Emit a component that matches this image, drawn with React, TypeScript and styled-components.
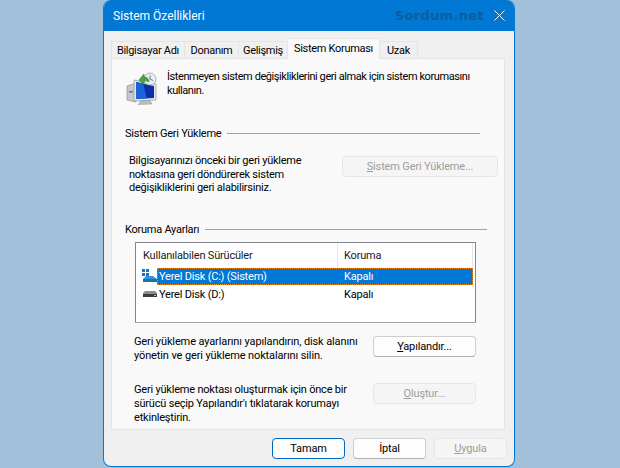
import React from "react";
import styled, { createGlobalStyle } from "styled-components";

const GlobalStyle = createGlobalStyle`
  html, body {
    margin: 0;
    padding: 0;
    height: 468px;
    overflow: hidden;
    background: #a2c0da;
    font-family: Roboto, "Noto Sans", sans-serif;
    font-size: 11px;
    color: #000000;
  }
`;

const Page = styled.div`
  width: 620px;
  height: 468px;
  padding-left: 103px;
  box-sizing: border-box;
`;

const Window = styled.div`
  width: 412px;
  height: 467px;
  box-sizing: border-box;
  background: #f0f0f0;
  border: 1px solid #0078d4;
  border-top: none;
  border-radius: 8px;
  overflow: hidden;
  display: flex;
  flex-direction: column;
`;

const TitleBar = styled.div`
  height: 31px;
  flex: none;
  background: #0078d4;
  color: #ffffff;
  display: flex;
  align-items: center;
  padding: 0 9px 0 9px;
  font-size: 12px;
`;

const Watermark = styled.span`
  margin-left: auto;
  margin-right: 10px;
  font-family: "DejaVu Sans", sans-serif;
  font-weight: 700;
  font-size: 13px;
  letter-spacing: 0.3px;
  color: #0f5c9e;
`;

const Body = styled.div`
  flex: 1;
  display: flex;
  flex-direction: column;
  padding: 10px 9px 0 7px;
`;

const Tabs = styled.div`
  display: flex;
  height: 17px;
  position: relative;
  z-index: 1;
  letter-spacing: -0.3px;
`;

const Tab = styled.div<{ $w: number; $active?: boolean }>`
  box-sizing: border-box;
  height: ${(p) => (p.$active ? "21px" : "18px")};
  margin-top: ${(p) => (p.$active ? "-3px" : "0")};
  width: ${(p) => p.$w}px;
  background: ${(p) => (p.$active ? "#f9f9f9" : "#f0f0f0")};
  border: 1px solid #e4e4e4;
  border-left: none;
  border-bottom: ${(p) => (p.$active ? "none" : "1px solid #e4e4e4")};
  display: flex;
  align-items: center;
  justify-content: center;
  padding-bottom: ${(p) => (p.$active ? "2px" : "0")};
  white-space: nowrap;

  &:first-child {
    border-left: 1px solid #e4e4e4;
  }
`;

const Panel = styled.div`
  box-sizing: border-box;
  height: 372px;
  background: #f9f9f9;
  border: 1px solid #e4e4e4;
  padding: 13px 6px 0 13px;
  display: flex;
  flex-direction: column;
`;

const Intro = styled.div`
  display: flex;
  gap: 10px;
  height: 54px;
`;

const RestoreSvg = styled.svg`
  flex: none;
`;

const IntroText = styled.div`
  line-height: 13.5px;
  margin-top: -2px;
  white-space: nowrap;
  letter-spacing: -0.42px;
`;

const GroupHead = styled.div<{ $end: number; $top: number }>`
  display: flex;
  align-items: center;
  gap: 6px;
  height: 14px;
  margin-top: ${(p) => p.$top}px;
  margin-right: ${(p) => p.$end}px;
  white-space: nowrap;
  letter-spacing: -0.25px;

  &::after {
    content: "";
    flex: 1;
    height: 1px;
    background: #a0a0a0;
  }
`;

const ActionRow = styled.div<{ $left: number; $top: number }>`
  display: flex;
  justify-content: space-between;
  align-items: flex-start;
  margin-left: ${(p) => p.$left}px;
  margin-top: ${(p) => p.$top}px;
`;

const ActionText = styled.div<{ $line: number; $spacing: number }>`
  line-height: ${(p) => p.$line}px;
  letter-spacing: ${(p) => p.$spacing}px;
  white-space: nowrap;
`;

const Btn = styled.div<{
  $w: number;
  $disabled?: boolean;
  $primary?: boolean;
  $top?: number;
  $right?: number;
}>`
  box-sizing: border-box;
  width: ${(p) => p.$w}px;
  height: 21px;
  flex: none;
  margin-top: ${(p) => p.$top || 0}px;
  margin-right: ${(p) => p.$right || 0}px;
  display: flex;
  align-items: center;
  justify-content: center;
  border-radius: 4px;
  letter-spacing: -0.15px;
  background: ${(p) => (p.$disabled ? "#f5f5f5" : "#fdfdfd")};
  color: ${(p) => (p.$disabled ? "#9d9d9d" : "#000000")};
  border: 1px solid
    ${(p) => (p.$primary ? "#0067c0" : p.$disabled ? "#e6e6e6" : "#cfcfcf")};
  border-bottom-color: ${(p) =>
    p.$primary ? "#0067c0" : p.$disabled ? "#e6e6e6" : "#b0b0b0"};
`;

const Key = styled.span`
  text-decoration: underline;
`;

const ListBox = styled.div`
  box-sizing: border-box;
  width: 341px;
  height: 81px;
  margin: 5px 0 0 10px;
  background: #ffffff;
  border: 1px solid #85858f;
  border-bottom-color: #a5a5ad;
  padding-right: 2px;
  letter-spacing: -0.2px;
`;

const ListHeader = styled.div`
  display: flex;
  height: 25px;
`;

const HeadCell = styled.div<{ $w?: number }>`
  box-sizing: border-box;
  width: ${(p) => (p.$w ? `${p.$w}px` : "auto")};
  flex: ${(p) => (p.$w ? "none" : "1")};
  display: flex;
  align-items: center;
  padding-left: ${(p) => (p.$w ? 7 : 6)}px;
  border-right: 1px solid #e5e5e5;
  color: #1a1a1a;
`;

const ListRow = styled.div`
  display: flex;
  align-items: center;
  height: 17px;
  margin-bottom: 1px;
`;

const DiskIcon = styled.svg`
  width: 15px;
  height: 15px;
  flex: none;
  margin-left: 6px;
`;

const RowCells = styled.div<{ $selected?: boolean }>`
  flex: 1;
  height: 17px;
  box-sizing: border-box;
  display: flex;
  align-items: center;
  background: ${(p) => (p.$selected ? "#0078d7" : "transparent")};
  color: ${(p) => (p.$selected ? "#ffffff" : "#000000")};
  border: 1px ${(p) => (p.$selected ? "dotted #f58a1f" : "solid transparent")};
`;

const NameCell = styled.span`
  width: 186px;
  padding-left: 1px;
  box-sizing: border-box;
`;

const Footer = styled.div`
  display: flex;
  justify-content: flex-end;
  gap: 8px;
  margin: 8px -2px 0 0;
`;

const SystemRestoreIcon = () => (
  <RestoreSvg width="32" height="34" viewBox="0 0 32 34">
    <path d="M2 14 L11 11 L11 30 L2 28 Z" fill="#c4c8cc" stroke="#8c9094" strokeWidth="0.7" />
    <rect x="4" y="19" width="4" height="1.5" fill="#6f7378" />
    <path d="M9 8 L31 12 L31 28 L9 29 Z" fill="#e4e7ea" stroke="#8f959a" strokeWidth="0.7" />
    <path d="M11 10 L29 14 L29 26 L11 27 Z" fill="#0a2fa8" />
    <path d="M11 10 L18 11.5 L22 26.4 L11 27 Z" fill="#1c62d8" />
    <path d="M16 29 L25 28.5 L27 32 L13 32.5 Z" fill="#b9bec3" stroke="#8f959a" strokeWidth="0.5" />
    <circle cx="25" cy="7" r="6" fill="#e9eef2" stroke="#9aa3aa" strokeWidth="0.8" />
    <path d="M25 3.5 V7 L28 8.5" fill="none" stroke="#5b6670" strokeWidth="0.9" />
    <path d="M14 8 L19 2 L19 5 C22 5 24 7 24 10 C22 9 21 8.5 19 9 L19 13 Z" fill="#43a93c" stroke="#2a7d2a" strokeWidth="0.6" />
  </RestoreSvg>
);

const SystemDisk = () => (
  <DiskIcon viewBox="0 0 15 15">
    <rect x="0" y="0" width="3" height="3" fill="#1976c8" />
    <rect x="4" y="0" width="3" height="3" fill="#1976c8" />
    <rect x="0" y="4" width="3" height="3" fill="#1976c8" />
    <rect x="4" y="4" width="3" height="3" fill="#1976c8" />
    <path d="M1 10 L4 7 H11 L15 10 V13 H1 Z" fill="#2f97d6" />
    <rect x="1" y="10" width="14" height="3" fill="#1d6fb0" />
  </DiskIcon>
);

const PlainDisk = () => (
  <DiskIcon viewBox="0 0 15 15">
    <path d="M1 6 L3 4 H13 L15 6 V10 H1 Z" fill="#8d8d8d" />
    <rect x="1" y="7" width="14" height="3" fill="#3d3d3d" />
    <rect x="12" y="8" width="2" height="1" fill="#9be05a" />
  </DiskIcon>
);

const CloseIcon = () => (
  <svg width="11" height="11" viewBox="0 0 11 11">
    <path d="M0.5 0.5 L10.5 10.5 M10.5 0.5 L0.5 10.5" stroke="#ffffff" strokeWidth="1" />
  </svg>
);

const tabs = [
  { label: "Bilgisayar Adı", w: 74 },
  { label: "Donanım", w: 54 },
  { label: "Gelişmiş", w: 49 },
  { label: "Sistem Koruması", w: 92, active: true },
  { label: "Uzak", w: 38 },
];

const App = () => {
  return (
    <>
      <GlobalStyle />
      <Page>
        <Window>
          <TitleBar>
            Sistem Özellikleri
            <Watermark>Sordum.net</Watermark>
            <CloseIcon />
          </TitleBar>
          <Body>
            <Tabs>
              {tabs.map((t) => (
                <Tab key={t.label} $w={t.w} $active={t.active}>
                  {t.label}
                </Tab>
              ))}
            </Tabs>
            <Panel>
              <Intro>
                <SystemRestoreIcon />
                <IntroText>
                  İstenmeyen sistem değişikliklerini geri almak için sistem korumasını
                  <br />
                  kullanın.
                </IntroText>
              </Intro>

              <GroupHead $top={0} $end={18}>Sistem Geri Yükleme</GroupHead>
              <ActionRow $left={4} $top={14}>
                <ActionText $line={13.5} $spacing={-0.25}>
                  Bilgisayarınızı önceki bir geri yükleme
                  <br />
                  noktasına geri döndürerek sistem
                  <br />
                  değişikliklerini geri alabilirsiniz.
                </ActionText>
                <Btn $w={156} $disabled $top={2}>
                  <span>
                    <Key>S</Key>istem Geri Yükleme...
                  </span>
                </Btn>
              </ActionRow>

              <GroupHead $top={28} $end={11}>Koruma Ayarları</GroupHead>
              <ListBox>
                <ListHeader>
                  <HeadCell $w={202}>Kullanılabilen Sürücüler</HeadCell>
                  <HeadCell>Koruma</HeadCell>
                </ListHeader>
                <ListRow>
                  <SystemDisk />
                  <RowCells $selected>
                    <NameCell>Yerel Disk (C:) (Sistem)</NameCell>
                    <span>Kapalı</span>
                  </RowCells>
                </ListRow>
                <ListRow>
                  <PlainDisk />
                  <RowCells>
                    <NameCell>Yerel Disk (D:)</NameCell>
                    <span>Kapalı</span>
                  </RowCells>
                </ListRow>
              </ListBox>

              <ActionRow $left={9} $top={12}>
                <ActionText $line={14.5} $spacing={-0.12}>
                  Geri yükleme ayarlarını yapılandırın, disk alanını
                  <br />
                  yönetin ve geri yükleme noktalarını silin.
                </ActionText>
                <Btn $w={103} $right={22} $top={1}>
                  <span>
                    <Key>Y</Key>apılandır...
                  </span>
                </Btn>
              </ActionRow>

              <ActionRow $left={9} $top={19}>
                <ActionText $line={14} $spacing={-0.2}>
                  Geri yükleme noktası oluşturmak için önce bir
                  <br />
                  sürücü seçip Yapılandır'ı tıklatarak korumayı
                  <br />
                  etkinleştirin.
                </ActionText>
                <Btn $w={103} $disabled $right={22}>
                  <span>
                    <Key>O</Key>luştur...
                  </span>
                </Btn>
              </ActionRow>
            </Panel>
            <Footer>
              <Btn $w={73} $primary>Tamam</Btn>
              <Btn $w={73}>İptal</Btn>
              <Btn $w={73} $disabled>
                <span>
                  <Key>U</Key>ygula
                </span>
              </Btn>
            </Footer>
          </Body>
        </Window>
      </Page>
    </>
  );
};

export default App;
